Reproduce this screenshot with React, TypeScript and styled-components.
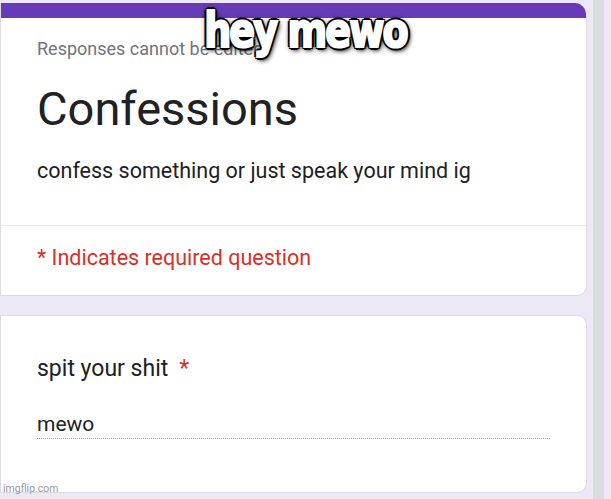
import styled, { createGlobalStyle } from 'styled-components'

const GlobalStyle = createGlobalStyle`
  html, body {
    margin: 0;
    padding: 0;
    background: #ede7f6;
    font-family: Roboto, 'Noto Sans', Arial, sans-serif;
  }
`

const Page = styled.div`
  position: relative;
  width: 611px;
  height: 499px;
  overflow: hidden;
  display: flex;
  background: #ede7f6;
`

const Column = styled.div`
  width: 587px;
  padding-top: 3px;
  display: flex;
  flex-direction: column;
  gap: 19px;
`

const Scrollbar = styled.div`
  width: 11px;
  margin-left: 6px;
  background: #dadce0;
`

const Card = styled.div`
  background: #fff;
  border: 1px solid #dadce0;
  border-radius: 0 10px 10px 0;
  overflow: hidden;
`

const HeaderCard = styled(Card)`
  border-top: none;
  border-radius: 0 12px 10px 0;
`

const TopBar = styled.div`
  height: 15px;
  background: #673ab7;
`

const Section = styled.div<{ $pad: string }>`
  padding: ${(p) => p.$pad};
`

const Divider = styled.div`
  height: 1px;
  background: #e8e8ec;
`

const Notice = styled.div`
  font-size: 18px;
  color: #70757a;
`

const Title = styled.h1`
  margin: 0;
  font-weight: 400;
  font-size: 47px;
  line-height: 54px;
  color: #202124;
`

const Description = styled.p`
  margin: 0;
  font-size: 21.5px;
  color: #202124;
`

const Required = styled.div`
  font-size: 21.5px;
  color: #d93025;
`

const Question = styled.div`
  font-size: 23px;
  color: #202124;
`

const Star = styled.span`
  color: #d93025;
  margin-left: 11px;
`

const Answer = styled.div`
  width: 513px;
  margin-top: 30px;
  padding-bottom: 2px;
  font-size: 21px;
  color: #202124;
  border-bottom: 1px dotted #9aa0a6;
`

const MemeText = styled.div`
  position: absolute;
  top: 6px;
  left: 0;
  width: 611px;
  text-align: center;
  font-family: Impact, 'DejaVu Sans', 'Liberation Sans', sans-serif;
  font-stretch: condensed;
  font-weight: 700;
  font-size: 45px;
  line-height: 50px;
  letter-spacing: -2px;
  color: #fff;
  transform: scale(0.94, 1.08);
  -webkit-text-stroke: 2px #fff;
  text-shadow: 2px 2px 0 #000, -2px -2px 0 #000, 2px -2px 0 #000, -2px 2px 0 #000, 0 3px 0 #000,
    0 -3px 0 #000, 3px 0 0 #000, -3px 0 0 #000, 0 0 6px #000, 2px 3px 5px #000;
`

const Watermark = styled.div`
  position: absolute;
  left: 3px;
  bottom: 4px;
  font-family: Roboto, Arial, sans-serif;
  font-size: 10.5px;
  color: #9a9a9a;
`

export default function App() {
  return (
    <>
      <GlobalStyle />
      <Page>
        <Column>
          <HeaderCard>
            <TopBar />
            <Section $pad="20px 20px 0 36px">
              <Notice>Responses cannot be edited</Notice>
            </Section>
            <Section $pad="23px 20px 0 36px">
              <Title>Confessions</Title>
            </Section>
            <Section $pad="22px 20px 42px 36px">
              <Description>confess something or just speak your mind ig</Description>
            </Section>
            <Divider />
            <Section $pad="19px 20px 25px 36px">
              <Required>* Indicates required question</Required>
            </Section>
          </HeaderCard>
          <Card>
            <Section $pad="39px 20px 53px 36px">
              <Question>
                spit your shit<Star>*</Star>
              </Question>
              <Answer>mewo</Answer>
            </Section>
          </Card>
        </Column>
        <Scrollbar />
        <MemeText>hey mewo</MemeText>
        <Watermark>imgflip.com</Watermark>
      </Page>
    </>
  )
}
